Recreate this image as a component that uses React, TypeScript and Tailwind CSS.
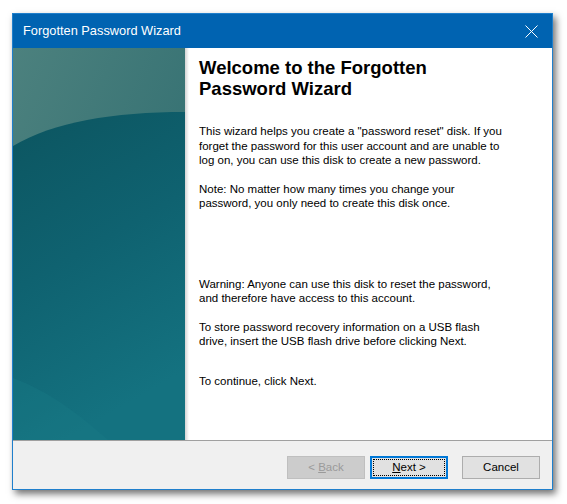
import React from "react";

const Banner = () => (
  <svg width="172" height="392" viewBox="0 0 172 392" preserveAspectRatio="none" className="block">
    <defs>
      <linearGradient id="top" x1="0" y1="0" x2="1" y2="1">
        <stop offset="0" stopColor="#4c817e" />
        <stop offset="1" stopColor="#2b6a6e" />
      </linearGradient>
      <linearGradient id="bot" x1="0" y1="0" x2="0.3" y2="1">
        <stop offset="0" stopColor="#0c5560" />
        <stop offset="0.5" stopColor="#0f6270" />
        <stop offset="1" stopColor="#147280" />
      </linearGradient>
    </defs>
    <rect x="0" y="0" width="172" height="392" fill="url(#top)" />
    <path d="M0 98 C 40 74, 100 64, 172 64 L172 392 L0 392 Z" fill="url(#bot)" />
    <path d="M0 392 L0 330 C 40 345, 70 370, 95 392 Z" fill="#1a7a86" opacity="0.35" />
  </svg>
);

export default function App() {
  const font = { fontFamily: '"Liberation Sans", Arial, sans-serif' };
  return (
    <div className="w-[567px] h-[504px] bg-white pt-[13px] pl-[12px]" style={font}>
      <div className="w-[541px] h-[477px] flex flex-col border border-[#1f7fcc] bg-white shadow-[3px_4px_7px_rgba(0,0,0,0.55)]">
        <div className="h-[34px] bg-[#0063b1] flex items-center justify-between pl-[10px] pr-[14px] shrink-0">
          <span className="text-white text-[12.8px]">Forgotten Password Wizard</span>
          <svg width="13" height="13" viewBox="0 0 13 13">
            <path d="M0.5 0.5 L12.5 12.5 M12.5 0.5 L0.5 12.5" stroke="white" strokeWidth="1" />
          </svg>
        </div>
        <div className="flex h-[392px] shrink-0">
          <div className="w-[172px] shrink-0">
            <Banner />
          </div>
          <div className="w-[4px] shrink-0 bg-gradient-to-r from-[#d4d4d4] to-white" />
          <div className="flex-1 bg-white pl-[10px] pr-[10px] pt-[9px] text-[11.5px] leading-[14.5px] text-black">
            <h1 className="text-[18.5px] leading-[21px] font-bold">Welcome to the Forgotten<br />Password Wizard</h1>
            <p className="mt-[25px]">This wizard helps you create a "password reset" disk. If you<br />forget the password for this user account and are unable to<br />log on, you can use this disk to create a new password.</p>
            <p className="mt-[14px]">Note: No matter how many times you change your<br />password, you only need to create this disk once.</p>
            <p className="mt-[66px]">Warning: Anyone can use this disk to reset the password,<br />and therefore have access to this account.</p>
            <p className="mt-[14px]">To store password recovery information on a USB flash<br />drive, insert the USB flash drive before clicking Next.</p>
            <p className="mt-[25px]">To continue, click Next.</p>
          </div>
        </div>
        <div className="flex-1 bg-[#f0f0f0] border-t border-[#a0a0a0] flex justify-end items-start pt-[15px] pr-[12px] text-[11.5px]">
          <button className="w-[78px] h-[23px] bg-[#cccccc] border border-[#bfbfbf] text-[#9a9a9a]">&lt; <span className="underline">B</span>ack</button>
          <button className="ml-[5px] w-[78px] h-[23px] bg-[#e1e1e1] border-2 border-[#0078d7] p-[1px] text-black">
            <span className="flex w-full h-full items-center justify-center border border-dotted border-black"><span className="underline">N</span>ext &gt;</span>
          </button>
          <button className="ml-[14px] w-[78px] h-[23px] bg-[#e1e1e1] border border-[#adadad] text-black">Cancel</button>
        </div>
      </div>
    </div>
  );
}
